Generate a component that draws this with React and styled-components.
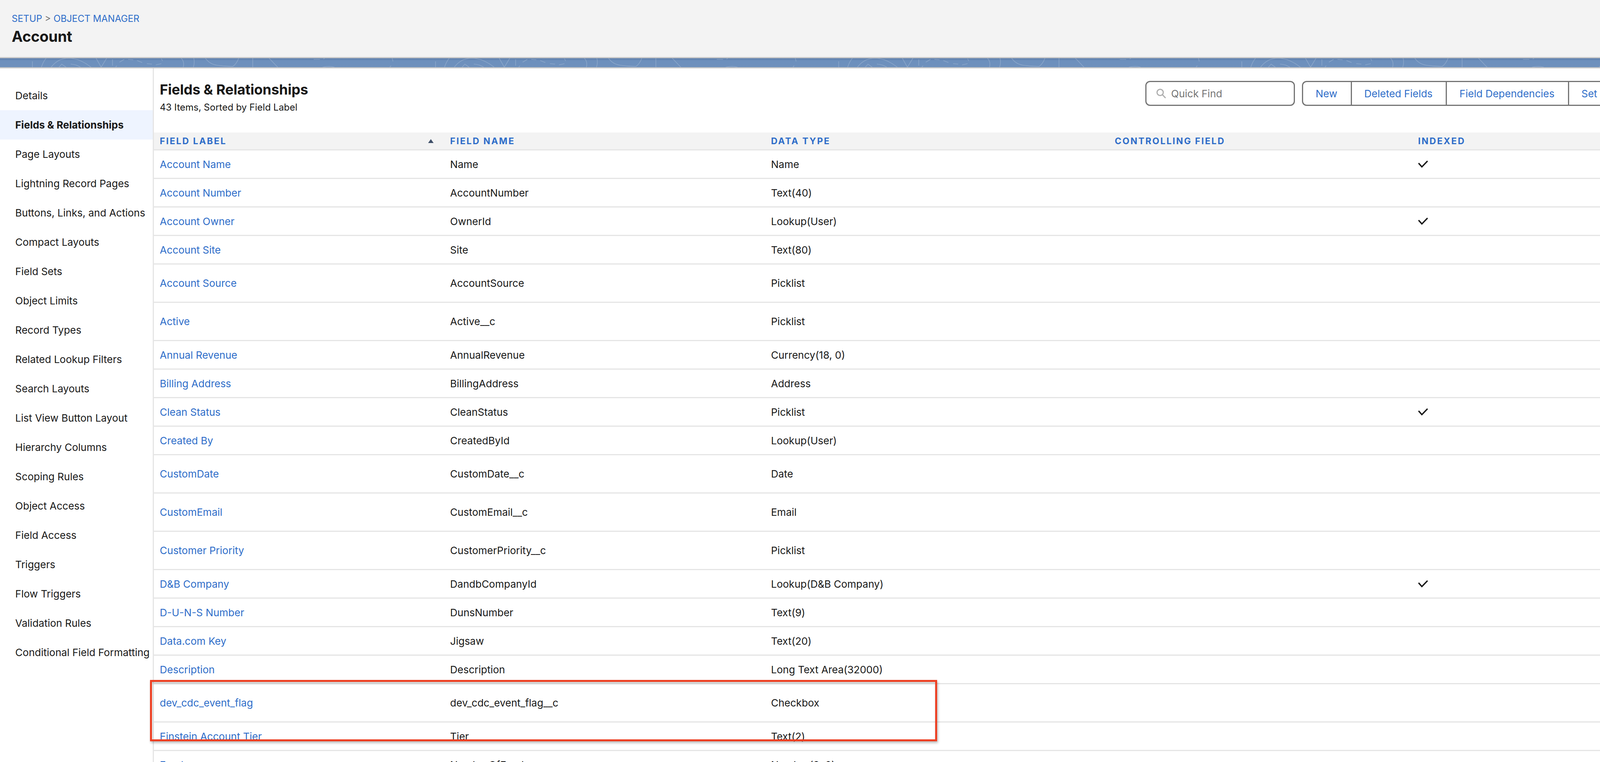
import React from "react";
import styled, { createGlobalStyle } from "styled-components";

const Global = createGlobalStyle`
  html, body {
    margin: 0;
    padding: 0;
    background: #fff;
    overflow: hidden;
  }
  * {
    box-sizing: border-box;
  }
`;

// widths are fractions of the window, the browser may open narrower than 4822
const Page = styled.div`
  position: relative;
  width: 100vw;
  height: 100vh;
  display: flex;
  flex-direction: column;
  overflow: hidden;
  font-family: Inter, "Liberation Sans", sans-serif;
  font-size: 26px;
  color: #181818;
`;

const Header = styled.header`
  height: 149px;
  flex: none;
  padding: 35px 30px 0;
  background: #f3f3f3;
  border-bottom: 3px solid #c9c9c9;
`;

const Breadcrumb = styled.div`
  font-size: 23.8px;
  line-height: 26px;
  color: #747474;

  a {
    color: #2e6dc9;
    text-decoration: none;
  }
`;

const PageTitle = styled.h1`
  margin: 9px 0 0;
  font-size: 38px;
  line-height: 46px;
  font-weight: 700;
  letter-spacing: -0.3px;
`;

const BandBox = styled.div`
  height: 26px;
  flex: none;
  background: linear-gradient(#5f7fab, #6d90bd 30%, #6e90bc);
  border-bottom: 3px solid #c9c9c9;

  svg {
    display: block;
    width: 100%;
    height: 23px;
  }
`;

const Body = styled.div`
  flex: 1;
  min-height: 0;
  display: flex;
`;

const Sidebar = styled.nav`
  width: 9.62%;
  flex: none;
  padding-top: 32px;
  border-right: 3px solid #e5e5e5;
`;

const SideItem = styled.div`
  height: 75px;
  padding-left: 10%;
  display: flex;
  align-items: center;
  white-space: nowrap;
  font-weight: ${(p) => (p.$active ? 700 : 400)};
  background: ${(p) => (p.$active ? "#eef4ff" : "transparent")};
`;

const Main = styled.main`
  flex: 1;
  min-width: 0;
  overflow: hidden;
`;

const Toolbar = styled.div`
  height: 164px;
  display: flex;
  padding: 32px 0 0 15px;
`;

const TitleBlock = styled.div`
  flex: 1;
  min-width: 0;
`;

const Title = styled.h2`
  margin: 0;
  font-size: 36px;
  line-height: 44px;
  font-weight: 700;
  letter-spacing: -0.2px;
`;

const Subtitle = styled.div`
  margin-top: 8px;
  font-size: 24px;
  line-height: 32px;
`;

const Actions = styled.div`
  width: 1164px;
  height: 64px;
  flex: none;
  display: flex;
  gap: 18px;
  overflow: hidden;
`;

const Search = styled.div`
  width: 383px;
  flex: none;
  padding-left: 24px;
  display: flex;
  align-items: center;
  gap: 13px;
  border: 3px solid #747474;
  border-radius: 12px;
  color: #747474;

  svg {
    flex: none;
  }
`;

const ButtonGroup = styled.div`
  flex: none;
  display: flex;
  border: 3px solid #747474;
  border-right: 0;
  border-radius: 12px 0 0 12px;
`;

const GroupButton = styled.div`
  padding: 0 34px 0 32px;
  display: flex;
  align-items: center;
  white-space: nowrap;
  color: #2e6dc9;
  border-left: ${(p) => (p.$first ? "0" : "3px solid #747474")};
`;

const TableRow = styled.div`
  height: ${(p) => (p.$tall ? 98 : 73)}px;
  display: grid;
  grid-template-columns: 875fr 967fr 1036fr 914fr 566fr;
  align-items: center;
  border-bottom: 3px solid #e5e5e5;
`;

const HeadRow = styled(TableRow)`
  height: 46px;
  background: #f3f3f3;
`;

const HeadCell = styled.div`
  padding-left: 15px;
  display: flex;
  align-items: center;
  justify-content: space-between;
  white-space: nowrap;
  font-size: 23px;
  font-weight: 700;
  letter-spacing: 2.7px;
  color: #2e6dc9;
`;

const SortArrow = styled.span`
  width: 0;
  height: 0;
  margin-right: 27px;
  border-left: 7px solid transparent;
  border-right: 7px solid transparent;
  border-bottom: 10px solid #3e4f68;
`;

const Cell = styled.div`
  padding-left: 15px;
  white-space: nowrap;
`;

const LinkCell = styled(Cell)`
  color: #2e6dc9;
`;

const RedBox = styled.div`
  position: absolute;
  left: 9.37%;
  top: 1740px;
  width: 49.19%;
  height: 157px;
  border: 5px solid #ee4023;
  box-shadow: 2px 4px 6px rgba(0, 0, 0, 0.28), inset 1px 4px 5px rgba(0, 0, 0, 0.2);
  pointer-events: none;
`;

const sideItems = [
  "Details",
  "Fields & Relationships",
  "Page Layouts",
  "Lightning Record Pages",
  "Buttons, Links, and Actions",
  "Compact Layouts",
  "Field Sets",
  "Object Limits",
  "Record Types",
  "Related Lookup Filters",
  "Search Layouts",
  "List View Button Layout",
  "Hierarchy Columns",
  "Scoping Rules",
  "Object Access",
  "Field Access",
  "Triggers",
  "Flow Triggers",
  "Validation Rules",
  "Conditional Field Formatting",
];

const fields = [
  { label: "Account Name", name: "Name", type: "Name", indexed: true },
  { label: "Account Number", name: "AccountNumber", type: "Text(40)" },
  { label: "Account Owner", name: "OwnerId", type: "Lookup(User)", indexed: true },
  { label: "Account Site", name: "Site", type: "Text(80)" },
  { label: "Account Source", name: "AccountSource", type: "Picklist", tall: true },
  { label: "Active", name: "Active__c", type: "Picklist", tall: true },
  { label: "Annual Revenue", name: "AnnualRevenue", type: "Currency(18, 0)" },
  { label: "Billing Address", name: "BillingAddress", type: "Address" },
  { label: "Clean Status", name: "CleanStatus", type: "Picklist", indexed: true },
  { label: "Created By", name: "CreatedById", type: "Lookup(User)" },
  { label: "CustomDate", name: "CustomDate__c", type: "Date", tall: true },
  { label: "CustomEmail", name: "CustomEmail__c", type: "Email", tall: true },
  { label: "Customer Priority", name: "CustomerPriority__c", type: "Picklist", tall: true },
  { label: "D&B Company", name: "DandbCompanyId", type: "Lookup(D&B Company)", indexed: true },
  { label: "D-U-N-S Number", name: "DunsNumber", type: "Text(9)" },
  { label: "Data.com Key", name: "Jigsaw", type: "Text(20)" },
  { label: "Description", name: "Description", type: "Long Text Area(32000)" },
  { label: "dev_cdc_event_flag", name: "dev_cdc_event_flag__c", type: "Checkbox", tall: true },
  { label: "Einstein Account Tier", name: "Tier", type: "Text(2)" },
  { label: "Employees", name: "NumberOfEmployees", type: "Number(8, 0)" },
];

const bandLines = [
  "M47 8V23",
  "M82 0Q74 10 70 23",
  "M95 23Q112 0 140 0T197 23",
  "M115 23L122 15L133 23",
  "M145 15Q160 16 170 23",
  "M210 0L223 23L237 0",
  "M252 3V19",
  "M260 23L263 19",
  "M270 10L282 3",
  "M292 3L305 4",
  "M315 6L328 11",
  "M340 14L353 15",
  "M363 17L377 14",
  "M377 1L380 7",
  "M428 0Q437 10 433 23",
  "M460 0Q463 11 459 23",
  "M490 0Q500 15 520 18T560 21Q570 14 575 0",
  "M611 0V23",
  "M653 0L675 23",
  "M767 3H783",
  "M795 0L792 2",
  "M790 23Q807 19 820 23",
  "M968 0L970 8",
  "M962 23L965 19",
];

function Band() {
  return (
    <BandBox>
      <svg xmlns="http://www.w3.org/2000/svg">
        <defs>
          <pattern id="bandPattern" x="2100" y="0" width="1032" height="23" patternUnits="userSpaceOnUse">
            <path
              d={bandLines.join(" ")}
              fill="none"
              stroke="#ffffff"
              strokeOpacity="0.2"
              strokeWidth="1.6"
            />
          </pattern>
        </defs>
        <rect width="100%" height="23" fill="url(#bandPattern)" />
      </svg>
    </BandBox>
  );
}

function SearchIcon() {
  return (
    <svg width="26" height="26" viewBox="0 0 26 26" fill="none" stroke="#aeaeae" strokeWidth="3">
      <circle cx="11" cy="10.5" r="8" />
      <path d="M17 16.5L24 24" strokeLinecap="round" />
    </svg>
  );
}

function Check() {
  return (
    <svg width="26" height="20" viewBox="0 0 26 20" fill="none" stroke="#181818" strokeWidth="3.4" style={{ display: "block" }}>
      <path d="M1.5 7.5L10 17L24.5 2" />
    </svg>
  );
}

function FieldRow({ field }) {
  return (
    <TableRow $tall={field.tall}>
      <LinkCell>{field.label}</LinkCell>
      <Cell>{field.name}</Cell>
      <Cell>{field.type}</Cell>
      <Cell />
      <Cell>{field.indexed && <Check />}</Cell>
    </TableRow>
  );
}

export default function App() {
  return (
    <Page>
      <Global />
      <Header>
        <Breadcrumb>
          <a>SETUP</a> &gt; <a>OBJECT MANAGER</a>
        </Breadcrumb>
        <PageTitle>Account</PageTitle>
      </Header>
      <Band />
      <Body>
        <Sidebar>
          {sideItems.map((item) => (
            <SideItem key={item} $active={item === "Fields & Relationships"}>
              {item}
            </SideItem>
          ))}
        </Sidebar>
        <Main>
          <Toolbar>
            <TitleBlock>
              <Title>Fields &amp; Relationships</Title>
              <Subtitle>43 Items, Sorted by Field Label</Subtitle>
            </TitleBlock>
            <Actions>
              <Search>
                <SearchIcon />
                Quick Find
              </Search>
              <ButtonGroup>
                <GroupButton $first>New</GroupButton>
                <GroupButton>Deleted Fields</GroupButton>
                <GroupButton>Field Dependencies</GroupButton>
                <GroupButton>Set History Tracking</GroupButton>
              </ButtonGroup>
            </Actions>
          </Toolbar>
          <HeadRow>
            <HeadCell>
              FIELD LABEL
              <SortArrow />
            </HeadCell>
            <HeadCell>FIELD NAME</HeadCell>
            <HeadCell>DATA TYPE</HeadCell>
            <HeadCell>CONTROLLING FIELD</HeadCell>
            <HeadCell>INDEXED</HeadCell>
          </HeadRow>
          {fields.map((field) => (
            <FieldRow key={field.name} field={field} />
          ))}
        </Main>
      </Body>
      <RedBox />
    </Page>
  );
}
